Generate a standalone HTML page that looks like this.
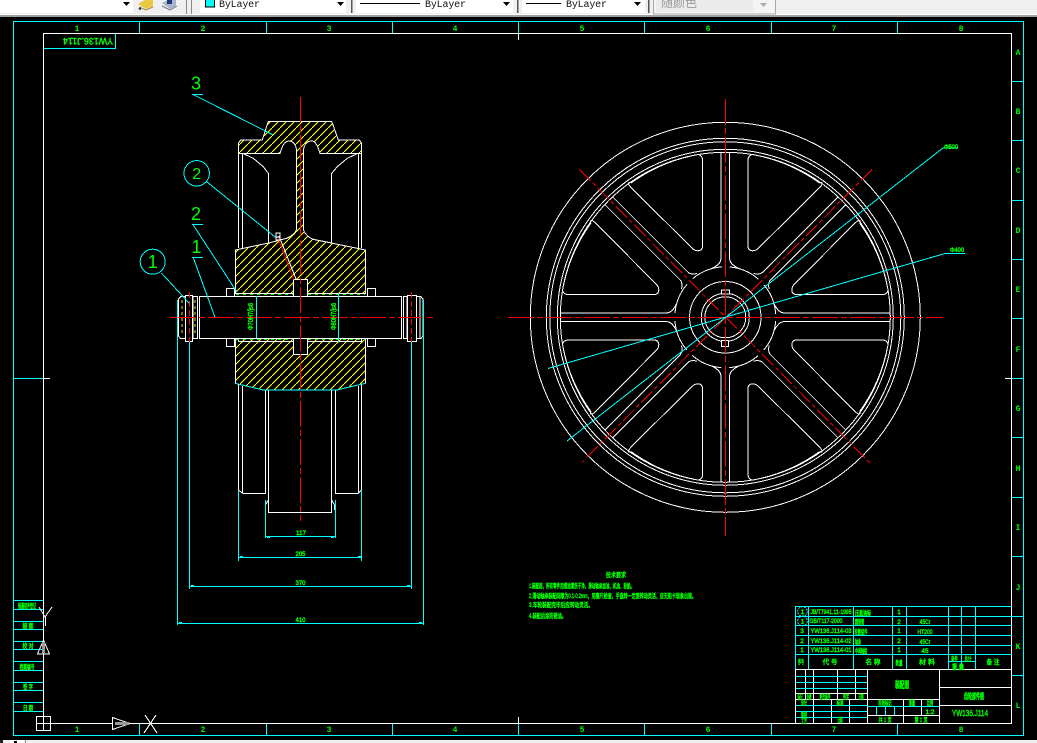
<!DOCTYPE html>
<html><head><meta charset="utf-8">
<style>
html,body{margin:0;padding:0;background:#000;width:1037px;height:743px;overflow:hidden}
svg{display:block}
.c{stroke:#0ff;stroke-width:1}
.w{stroke:#fff;stroke-width:1}
.r{stroke:#f00;stroke-width:1;stroke-dasharray:26 3 6 3}
text{font-family:"Liberation Sans","Noto Sans CJK SC",sans-serif}
.g{fill:#0f0;stroke:#0f0;stroke-width:.45;font-size:6.5px;text-anchor:middle}
.n{fill:#0f0;font-family:"Liberation Mono",monospace;font-size:8px;font-weight:bold;text-anchor:middle}
.t{font-family:"Liberation Mono",monospace;font-size:10px;fill:#111}
.l{fill:#0f0;font-family:"Liberation Sans",sans-serif;font-size:18px;text-anchor:middle}
</style></head><body>
<svg width="1037" height="743" viewBox="0 0 1037 743" xmlns="http://www.w3.org/2000/svg" fill="none">
<defs>
<pattern id="h" patternUnits="userSpaceOnUse" width="8" height="8"><path d="M-1 9L9 -1" stroke="#ff0" stroke-width="1" fill="none" shape-rendering="crispEdges"/></pattern>
<path id="win" d="M-22.6-156L-22.6-72Q-22.6-66.5-27.5-66.5Q-30.5-66.5-33-69L-91-126.4Q-101-136-94-134.5A164.7 164.7 0 0 1-27-162.8Q-22.6-162-22.6-156Z" class="w"/>
<path id="rib" d="M-4.4-165Q-4.4-162-4.4-160L-4.4-58Q-5-53-13-49M4.4-165L4.4-58Q5-53 13-49" class="w"/>
<path id="rib2" d="M-5.5-165L-5.5-58Q-6-54-11-51M5.5-165L5.5-58Q6-54 11-51" class="w"/>
</defs>
<rect width="1037" height="743" fill="#000"/>

<!-- top toolbar -->
<rect width="1037" height="17" fill="#f0f0f0"/>
<rect y="14" width="1037" height="1" fill="#fff"/>
<rect y="15" width="1037" height="2" fill="#a0a0a0"/>
<rect x="0" y="0" width="133" height="13" fill="#fff"/>
<path d="M123 2h7l-3.500 4z" fill="#000"/>
<path d="M138 4L145 0H153V6L146 9z" fill="#e8c840"/><path d="M139 7L146 10L153 7" stroke="#998a30" fill="none"/><path d="M138 9l3-2v3z" fill="#226"/>
<path d="M162 3L168 0H176V6L170 9z" fill="#a9b4c8"/><path d="M162 6L170 10L177 6" stroke="#707a90" fill="none"/><rect x="167" y="0" width="5" height="4" fill="#1a3a80"/>
<rect x="186" y="0" width="1" height="14" fill="#888"/><rect x="191" y="0" width="1" height="14" fill="#888"/>
<rect x="200" y="0" width="146" height="13" fill="#fff"/>
<rect x="205.500" y="-1" width="9" height="8" fill="#0ff" stroke="#000"/>
<text x="219" y="7" class="t" textLength="41">ByLayer</text>
<path d="M337 2h7l-3.500 4z" fill="#000"/>
<rect x="351" y="0" width="1.500" height="13" fill="#555"/>
<rect x="356" y="0" width="157" height="13" fill="#fff"/>
<rect x="360" y="3" width="60" height="1" fill="#000"/>
<text x="425" y="7" class="t" textLength="41">ByLayer</text>
<path d="M503 2h7l-3.500 4z" fill="#000"/>
<rect x="517" y="0" width="1.500" height="13" fill="#555"/>
<rect x="522" y="0" width="123" height="13" fill="#fff"/>
<rect x="526" y="3" width="35" height="1" fill="#000"/>
<text x="566" y="7" class="t" textLength="41">ByLayer</text>
<path d="M634 2h7l-3.500 4z" fill="#000"/>
<rect x="648" y="0" width="1.500" height="13" fill="#555"/>
<rect x="653.500" y="-1" width="122" height="15" fill="#f4f4f4" stroke="#a8a8a8"/>
<rect x="656" y="0" width="97" height="12" fill="#ebebeb"/>
<text x="661" y="7" style="font-family:'Liberation Sans','Noto Sans CJK SC',sans-serif;font-size:12px;fill:#9a9a9a">随颜色</text>
<path d="M760 3h7l-3.500 4z" fill="#aaa"/>

<g shape-rendering="crispEdges">
<!-- borders -->
<rect x="13.500" y="21.500" width="1010" height="714" class="c"/>
<rect x="43.500" y="33.500" width="968" height="690" class="w"/>
<path d="M139.500 22V33M266.500 22V33M392.500 22V33M644.500 22V33M771.500 22V33M897.500 22V33M139.500 724V735M266.500 724V735M392.500 724V735M644.500 724V735M771.500 724V735M897.500 724V735M518.500 22V33M518.500 724V735" class="c"/>
<path d="M518.500 33V40M518.500 717V723M43 378.500H50M1005 378.500H1012" class="w"/>
<path d="M14 378.500H43M1012 81.500H1023M1012 140.500H1023M1012 200.500H1023M1012 259.500H1023M1012 318.500H1023M1012 378.500H1023M1012 437.500H1023M1012 497.500H1023M1012 556.500H1023M1012 616.500H1023M1012 675.500H1023" class="c"/>
<path d="M44 48.500H115.500V34" class="c"/>
<!-- side panel -->
<path d="M14 600.500H43M14 609.500H43M14 621.500H43M14 629.500H43M14 641.500H43M14 649.500H43M14 661.500H43M14 670.500H43M14 682.500H43M14 690.500H43M14 702.500H43M14 711.500H43" class="c"/>
<!-- UCS / icons -->
<path d="M39 607L45 617L52 607M45.500 617V626" class="w"/>
<path d="M43.500 640L37.500 654H49.500Z" class="w"/><path d="M43.500 642V653" stroke="#999" stroke-width="3"/>
<rect x="36.500" y="716.500" width="14" height="14" fill="#000" class="w"/><path d="M43.500 716V731M36 723.500H51" class="w"/>
<path d="M112.500 717.500V729.500L130 723.500Z" fill="#000" class="w"/><path d="M115 723.500H129" stroke="#999" stroke-width="3"/>
<path d="M145 715L157 733M156 715L144 733" class="w"/>

<!-- LEFT VIEW -->
<path d="M238.300 153.300V143.300L240.700 140H262.300L268.300 121.300H331.700L338.300 140H359.300L361.700 143.300V153.300H320C318 147 316 141 311.500 141C306 141 303.500 146 303.300 152V228C303.300 232 308 238 314 239.500L330 242.700L365.300 250V293.300H307.700V279.300H293.300V293.300H235.300V250L270 242.700L286.700 238.300C292 236 296.700 232 296.700 228V152C296.500 146 294 141 289 141C284 141 282 147 280 153.300Z" fill="url(#h)" class="w"/>
<path d="M235.300 338.500V383.300Q246 386 263.300 390H336.700Q354 386 365.300 383.300V338.500H307.700V354.300H293.300V338.500Z" fill="url(#h)"/>
<path d="M235.300 338.500V383.300M365.300 338.500V383.300M238.500 341.500H293.300M307.700 341.500H361.500M238.500 338.500V341.500M361.500 338.500V341.500" class="w"/>
<path d="M235.300 383.300Q246 386 263.300 390H336.700Q354 386 365.300 383.300" class="c"/>
<rect x="293.500" y="338.500" width="14" height="16" fill="#000" class="w"/>
<rect x="293.500" y="279.500" width="14" height="17" fill="#000" class="w"/>
<path d="M238.300 153V248M361.700 153V248M242.700 153V248M358.300 153V248" class="w"/>
<path d="M242.700 153.300L253.300 158.300L263.300 166.700L268.300 173.300V243M358 153.300L347.300 158.300L337.300 166.700L331.700 173.300V243" class="w"/>
<!-- lower -->
<path d="M238.300 384V490L242.700 493.300H265.300V390M361.700 384V490L358.300 493.300H335.700V390M242.700 386V493M358.300 386V493M268.300 390V512.500H331.700V390M268.300 500L265.500 505V510M331.700 500L334.500 505V510" class="w"/>
<!-- shaft -->
<rect x="199.500" y="296.500" width="202" height="42" fill="#000" class="w"/>
<path d="M180.500 297L178.500 299V336L180.500 338.500H197.500V296.700H180.500ZM185.500 297V338M193 297V338" class="w" fill="#000"/>
<path d="M182 300V336M195 300V336" stroke="#e6e600" stroke-dasharray="3 3"/>
<rect x="185.500" y="295.500" width="7" height="46" fill="#000" class="w"/>
<path d="M403.500 296.700H421L423 299V336L421 338.500H403.500ZM420 297V338M407 297V338" class="w" fill="#000"/>
<rect x="407.500" y="295.500" width="9" height="46" fill="#000" class="w"/>
<rect x="226.500" y="288.500" width="8" height="8" fill="#000" class="w"/>
<rect x="367.500" y="288.500" width="8" height="8" fill="#000" class="w"/>
<rect x="226.500" y="338.500" width="8" height="8" fill="#000" class="w"/>
<rect x="367.500" y="338.500" width="8" height="8" fill="#000" class="w"/>
<path d="M236 294.500H293M308 294.500H365M236 339.500H293M308 339.500H365" stroke="#0f0" stroke-dasharray="3 4"/>
<path d="M235.500 293.500H293.500M307.500 293.500H365.500" class="w"/>
<!-- screw -->
<path d="M279 236L296 279" stroke="#fff" fill="none"/><path d="M277.500 237L294 280" stroke="#f00" fill="none"/>
<path d="M274.500 237H279M276 233H280V240H276Z" stroke="#fff" fill="none"/>
<!-- centre lines -->
<path d="M300.500 97V521" class="r"/>
<path d="M170 317.500H436" class="r"/>
<path d="M189.500 292V342M411.500 292V342" stroke="#f00" stroke-dasharray="6 3"/>
<!-- dim lines -->
<path d="M256.500 296V338M338.500 293V342M177.500 300V625M423.500 300V625M189.500 342V589M411.500 342V589M238.500 491V561M361.500 491V561M265.500 500V538M335.500 500V538M265 536.500H336M238 557.500H362M189 586.500H412M177 623.500H424" class="c"/>
<path d="M267 537.500h3M331 537.500h3M240 556.500h3M358 556.500h3M191 585.500h3M407 585.500h3M179 622.500h3M419 622.500h3" class="c"/>
<!-- leaders -->
<path d="M192.700 94.300L273.300 135M206.700 181.700L276.700 238.300M193.300 225L236.700 291.700M193.300 257.700L215 317.300M161.700 273.300L189.300 303.300" class="c"/>
<path d="M192 94.500H203M192 224.500H203M192 257.500H203" class="c"/>
<circle cx="196.700" cy="173.300" r="12.700" class="c"/>
<circle cx="152.700" cy="261.700" r="12.500" class="c"/>

<!-- RIGHT VIEW -->
<g transform="translate(725.300 317.300)">
<circle r="195" class="w"/><circle r="179" class="w"/><circle r="175.500" class="w"/><circle r="168" class="w"/><circle r="165" class="w"/>
<use href="#win"/><use href="#win" transform="rotate(90)"/><use href="#win" transform="rotate(180)"/><use href="#win" transform="rotate(270)"/>
<use href="#win" transform="scale(-1 1)"/><use href="#win" transform="rotate(90) scale(-1 1)"/><use href="#win" transform="rotate(180) scale(-1 1)"/><use href="#win" transform="rotate(270) scale(-1 1)"/>
<use href="#rib"/><use href="#rib" transform="rotate(90)"/><use href="#rib" transform="rotate(180)"/><use href="#rib" transform="rotate(270)"/>
<use href="#rib2" transform="rotate(45)"/><use href="#rib2" transform="rotate(135)"/><use href="#rib2" transform="rotate(225)"/><use href="#rib2" transform="rotate(315)"/>
<circle r="50.500" class="w" stroke-dasharray="31.670 8" stroke-dashoffset="-4"/>
<circle r="35.700" class="w"/><circle r="24" class="w"/><circle r="20.500" class="w"/>
<rect x="-3.800" y="-27.300" width="8" height="4" fill="#000" class="w"/>
<rect x="-3.800" y="23.300" width="7" height="6" fill="#000" class="w"/>
</g>
<path d="M725.500 99V536M508 317.500H943" class="r"/>
<path d="M579.300 169.300L872 465M872 169.300L579.300 465" stroke="#f00" fill="none" stroke-dasharray="16 3 4 3"/>
<path d="M567 441L943 148H958M548 368.500L945 253.500H965" class="c"/>

<!-- title block -->
<path d="M795.500 606.500H1012M796 616.500H1023M796 625.500H1012M796 635.500H1012M796 645.500H1012M796 654.500H1012M948 661.500H975M808.500 606V669M853.500 606V669M892.500 606V669M906.500 606V669M948.500 606V669M961.500 606V669M975.500 606V669M795.500 606V669" class="c"/>
<path d="M795 669.500H1012M795.500 669V723M867.500 669V723M939.500 669V723M939 687.500H1012M939 705.500H1012M795 693.500H867M795 699.500H939M813.500 669V723M805.500 669V699M837.500 669V699M855.500 669V699M831.500 699V723M849.500 699V723M903.500 699V723M921.500 699V715M867 715.500H939" class="w"/>
<path d="M796 676.500H867M796 682.500H867M796 688.500H867M796 705.500H867M796 711.500H867M796 717.500H867M867 706.500H939M876.500 706V715M885.500 706V715M894.500 706V715" class="c"/>
<circle cx="802.500" cy="611.500" r="4.800" class="c" stroke-dasharray="2 1"/>
<circle cx="802.500" cy="621" r="4.800" class="c" stroke-dasharray="2 1"/>
</g>

<!-- labels -->
<g>
<text class="n" x="77" y="31">1</text><text class="n" x="203" y="31">2</text><text class="n" x="329" y="31">3</text><text class="n" x="455" y="31">4</text><text class="n" x="582" y="31">5</text><text class="n" x="708" y="31">6</text><text class="n" x="834" y="31">7</text><text class="n" x="961" y="31">8</text>
<text class="n" x="77" y="732">1</text><text class="n" x="203" y="732">2</text><text class="n" x="329" y="732">3</text><text class="n" x="455" y="732">4</text><text class="n" x="582" y="732">5</text><text class="n" x="708" y="732">6</text><text class="n" x="834" y="732">7</text><text class="n" x="961" y="732">8</text>
<text class="n" x="1018" y="55">A</text><text class="n" x="1018" y="114">B</text><text class="n" x="1018" y="173">C</text><text class="n" x="1018" y="233">D</text><text class="n" x="1018" y="292">E</text><text class="n" x="1018" y="352">F</text><text class="n" x="1018" y="411">G</text><text class="n" x="1018" y="471">H</text><text class="n" x="1018" y="530">I</text><text class="n" x="1018" y="590">J</text><text class="n" x="1018" y="649">K</text><text class="n" x="1018" y="708">L</text>
<text class="g" transform="rotate(180 88 41)" x="88" y="44" textLength="50" lengthAdjust="spacingAndGlyphs" style="font-size:9px">YW136.J114</text>
<text class="l" x="196" y="89.500">3</text><text class="l" x="196" y="220">2</text><text class="l" x="196.500" y="253">1</text><text class="l" style="font-size:16px" x="196.700" y="179">2</text><text class="l" x="152.700" y="268">1</text>
<text class="g" transform="rotate(-90 250.700 316.500)" x="250.700" y="319" textLength="27" lengthAdjust="spacingAndGlyphs" style="font-size:7px">Φ70H7/js6</text>
<text class="g" transform="rotate(-90 333.300 316.500)" x="333.300" y="319" textLength="27" lengthAdjust="spacingAndGlyphs" style="font-size:7px">Φ80H7/js6</text>
<text class="g" x="301" y="535" textLength="10" lengthAdjust="spacingAndGlyphs">117</text>
<text class="g" x="300.500" y="556" textLength="10" lengthAdjust="spacingAndGlyphs">205</text>
<text class="g" x="300.500" y="585" textLength="10" lengthAdjust="spacingAndGlyphs">370</text>
<text class="g" x="300.500" y="622" textLength="10" lengthAdjust="spacingAndGlyphs">410</text>
<text class="g" x="951" y="149" textLength="14" lengthAdjust="spacingAndGlyphs">Φ500</text>
<text class="g" x="957" y="252" textLength="14" lengthAdjust="spacingAndGlyphs">Φ400</text>
<!-- side -->
<text class="g" x="27" y="608" textLength="18" lengthAdjust="spacingAndGlyphs">借通用件登记</text>
<text class="g" x="28" y="628" textLength="11" lengthAdjust="spacingAndGlyphs">描 图</text>
<text class="g" x="28" y="648" textLength="11" lengthAdjust="spacingAndGlyphs">校 对</text>
<text class="g" x="27" y="669" textLength="15" lengthAdjust="spacingAndGlyphs">档案编号</text>
<text class="g" x="28" y="689" textLength="10" lengthAdjust="spacingAndGlyphs">签 字</text>
<text class="g" x="28" y="710" textLength="10" lengthAdjust="spacingAndGlyphs">日 期</text>
<!-- notes -->
<text class="g" x="616" y="577" textLength="20" lengthAdjust="spacingAndGlyphs">技术要求</text>
<text class="g" style="text-anchor:start" x="529" y="588" textLength="105" lengthAdjust="spacingAndGlyphs">1.装配前，所有零件用煤油清洗干净，滑动轴承加油，机油、轮胎。</text>
<text class="g" style="text-anchor:start" x="529" y="598" textLength="167" lengthAdjust="spacingAndGlyphs">2.滑动轴承装配间隙为0.1-0.2mm，用塞尺检查，手盘转一定要转动灵活，应无阻卡现象出现。</text>
<text class="g" style="text-anchor:start" x="529" y="607" textLength="64" lengthAdjust="spacingAndGlyphs">3.车轮装配完毕后应转动灵活。</text>
<text class="g" style="text-anchor:start" x="529" y="618" textLength="37" lengthAdjust="spacingAndGlyphs">4.装配后涂防锈油。</text>
<!-- title block text -->
<text class="g" x="831" y="614" textLength="41" lengthAdjust="spacingAndGlyphs">JB/T7941.11-1995</text>
<text class="g" x="826" y="623" textLength="33" lengthAdjust="spacingAndGlyphs">GB/T117-2000</text>
<text class="g" x="831" y="633" textLength="41" lengthAdjust="spacingAndGlyphs">YW136.J114-03</text>
<text class="g" x="831" y="643" textLength="41" lengthAdjust="spacingAndGlyphs">YW136.J114-02</text>
<text class="g" x="831" y="652" textLength="41" lengthAdjust="spacingAndGlyphs">YW136.J114-01</text>
<text class="g" x="802.500" y="614">1</text><text class="g" x="802.500" y="623.500">1</text><text class="g" x="802" y="633">3</text><text class="g" x="802" y="643">2</text><text class="g" x="802" y="652">1</text>
<text class="g" x="863" y="615" textLength="16" lengthAdjust="spacingAndGlyphs">压盖油标</text>
<text class="g" x="859.500" y="624" textLength="9" lengthAdjust="spacingAndGlyphs">圆锥销</text>
<text class="g" x="861" y="634" textLength="13" lengthAdjust="spacingAndGlyphs">轮毂组件</text>
<text class="g" x="858" y="644" textLength="6" lengthAdjust="spacingAndGlyphs">轴承</text>
<text class="g" x="861" y="653" textLength="12" lengthAdjust="spacingAndGlyphs">中间轴组</text>
<text class="g" x="899" y="614">1</text><text class="g" x="899" y="624">2</text><text class="g" x="899" y="633">1</text><text class="g" x="899" y="643">2</text><text class="g" x="899" y="652">1</text>
<text class="g" x="925" y="624" textLength="11" lengthAdjust="spacingAndGlyphs">45Cr</text>
<text class="g" x="925" y="634" textLength="15" lengthAdjust="spacingAndGlyphs">HT200</text>
<text class="g" x="925" y="644" textLength="11" lengthAdjust="spacingAndGlyphs">45Cr</text>
<text class="g" x="925" y="653">45</text>
<text class="g" x="801" y="664" textLength="6" lengthAdjust="spacingAndGlyphs">序号</text>
<text class="g" x="830" y="664" textLength="15" lengthAdjust="spacingAndGlyphs">代 号</text>
<text class="g" x="873" y="664" textLength="15" lengthAdjust="spacingAndGlyphs">名 称</text>
<text class="g" x="899" y="665" textLength="7" lengthAdjust="spacingAndGlyphs">数量</text>
<text class="g" x="927" y="664" textLength="16" lengthAdjust="spacingAndGlyphs">材 料</text>
<text class="g" x="954.500" y="661" textLength="7" lengthAdjust="spacingAndGlyphs">单件</text><text class="g" x="968" y="661" textLength="7" lengthAdjust="spacingAndGlyphs">总计</text>
<text class="g" x="958" y="669" textLength="12" lengthAdjust="spacingAndGlyphs">重 量</text>
<text class="g" x="993" y="664" textLength="13" lengthAdjust="spacingAndGlyphs">备 注</text>
<text class="g" x="902" y="688" textLength="14" lengthAdjust="spacingAndGlyphs" style="font-size:9px;font-weight:bold">装配图</text>
<text class="g" x="974" y="699" textLength="20" lengthAdjust="spacingAndGlyphs" style="font-size:8px;font-weight:bold">齿轮部件图</text>
<text class="g" x="970" y="716" textLength="36" lengthAdjust="spacingAndGlyphs" style="font-size:8px">YW136.J114</text>
<text class="g" x="800" y="699" textLength="5" lengthAdjust="spacingAndGlyphs">标记</text>
<text class="g" x="809" y="699" textLength="5" lengthAdjust="spacingAndGlyphs">处数</text>
<text class="g" x="825" y="699" textLength="11" lengthAdjust="spacingAndGlyphs">更改单号</text>
<text class="g" x="846" y="699" textLength="6" lengthAdjust="spacingAndGlyphs">签字</text>
<text class="g" x="861" y="699" textLength="5" lengthAdjust="spacingAndGlyphs">日期</text>
<text class="g" x="804" y="705" textLength="6" lengthAdjust="spacingAndGlyphs">设计</text>
<text class="g" x="840" y="705" textLength="7" lengthAdjust="spacingAndGlyphs">标准</text>
<text class="g" x="804" y="717" textLength="6" lengthAdjust="spacingAndGlyphs">审核</text>
<text class="g" x="804" y="723" textLength="6" lengthAdjust="spacingAndGlyphs">工艺</text>
<text class="g" x="840" y="722" textLength="5" lengthAdjust="spacingAndGlyphs">日期</text>
<text class="g" x="885" y="705" textLength="13" lengthAdjust="spacingAndGlyphs">阶段标记</text>
<text class="g" x="912" y="705" textLength="6" lengthAdjust="spacingAndGlyphs">重量</text>
<text class="g" x="930" y="705" textLength="6" lengthAdjust="spacingAndGlyphs">比例</text>
<text class="g" x="930" y="714">1:2</text>
<text class="g" x="885" y="722" textLength="13" lengthAdjust="spacingAndGlyphs">共 1 页</text>
<text class="g" x="921" y="722" textLength="13" lengthAdjust="spacingAndGlyphs">第 1 页</text>
</g>

<!-- bottom status -->
<rect y="740" width="1037" height="3" fill="#f0f0f0"/>
<rect x="0" y="740" width="3" height="3" fill="#222"/><rect x="10" y="740" width="14" height="3" fill="#fff"/><rect x="14" y="741" width="3" height="2" fill="#000"/><rect x="25" y="740" width="1" height="3" fill="#888"/>
</svg>
</body></html>
